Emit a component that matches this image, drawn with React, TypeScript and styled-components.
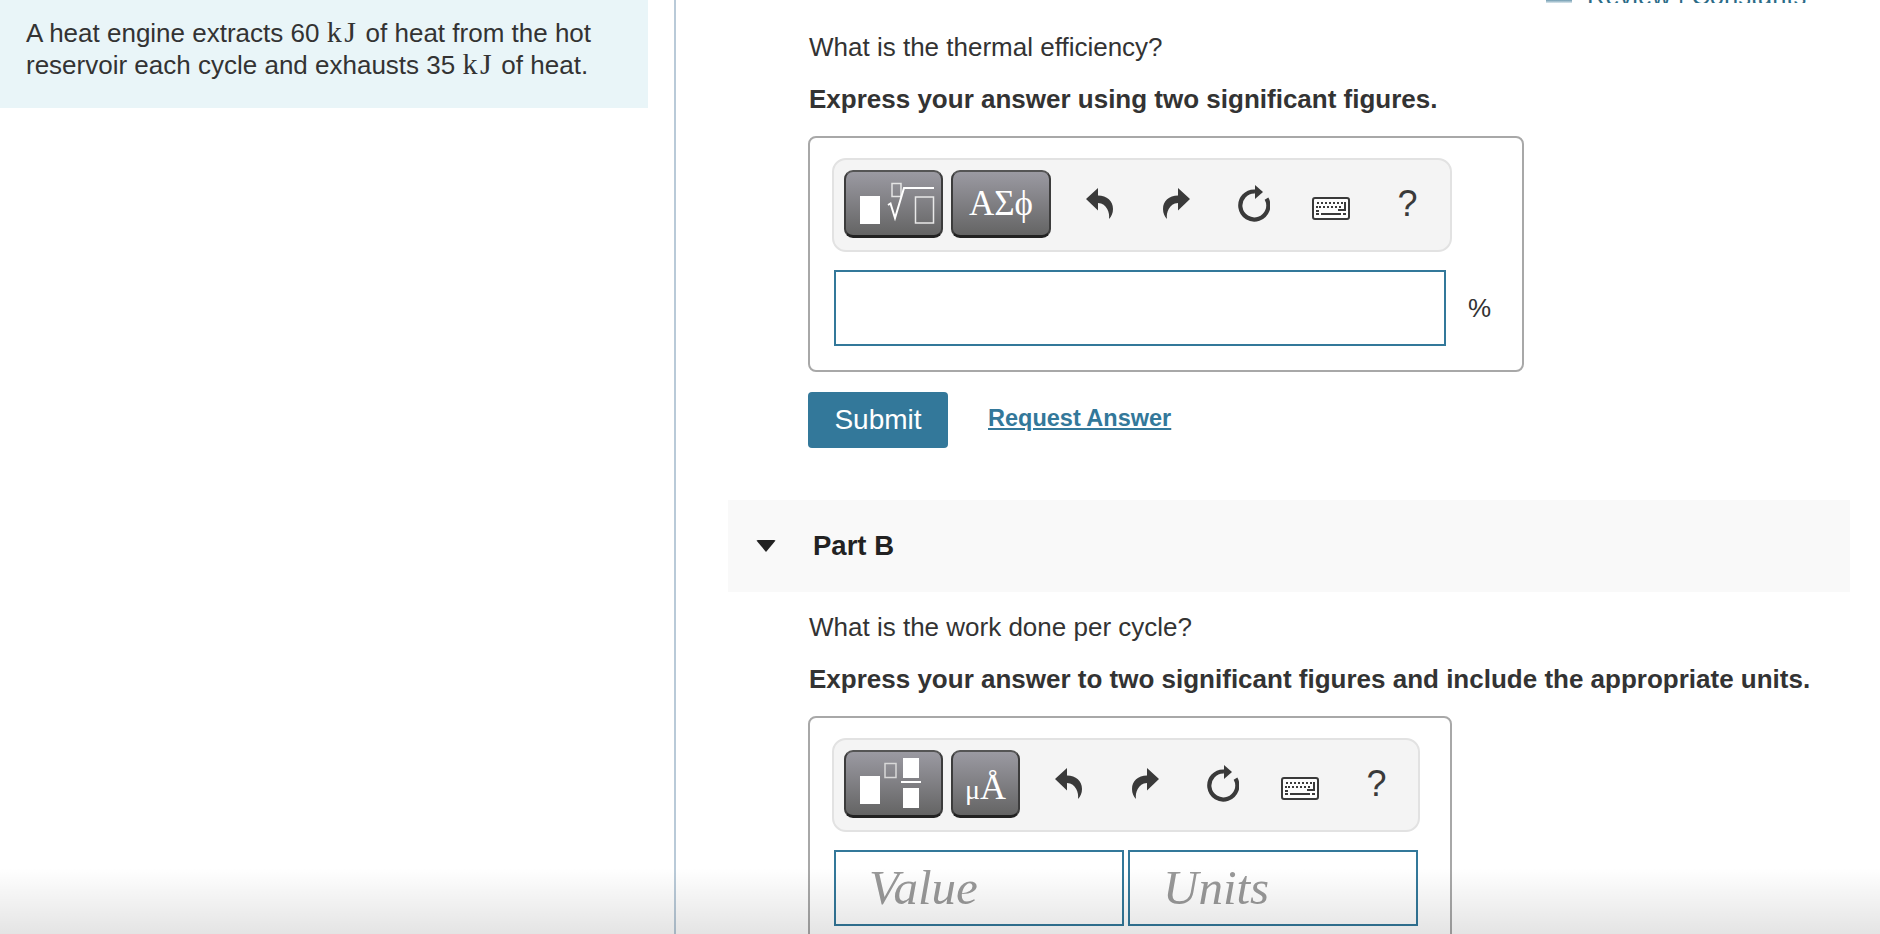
import React, { FC } from 'react';
import styled, { createGlobalStyle } from 'styled-components';

const GlobalStyle = createGlobalStyle`
  html, body {
    margin: 0;
    height: 100%;
    overflow: hidden;
    background: #fff;
  }
  body {
    font-family: "Liberation Sans", Arial, sans-serif;
    color: #333;
  }
`;

const UndoIcon: FC<{ flip?: boolean }> = ({ flip }) => (
  <svg width="27" height="31" viewBox="0 0 27 31" style={flip ? { transform: 'scaleX(-1)' } : undefined}>
    <path
      d="M0 11 L12 0 V7.5 C21 7.5 27 13 27 21 C27 25 25.5 28.500 23 31 C24 25 21 15.500 12 15 V22.500 Z"
      fill="#3a3a3a"
    />
  </svg>
);

const RefreshIcon = () => (
  <svg width="32" height="37" viewBox="0 0 32 37">
    <path d="M28.500 13.600 A14 14 0 1 1 17 6.500" fill="none" stroke="#3a3a3a" strokeWidth="4.200" />
    <path d="M17 0 L25 7 L17 14 Z" fill="#3a3a3a" />
  </svg>
);

const KeyboardIcon = () => (
  <svg width="38" height="23" viewBox="0 0 38 23">
    <rect x="1" y="1" width="36" height="21" rx="2" fill="#fdfdfd" stroke="#3a3a3a" strokeWidth="2" />
    <g fill="#3a3a3a">
      {[5, 9, 13, 17, 21, 25, 29].map((x) => (
        <rect key={x} x={x} y="5" width="2" height="2" />
      ))}
      {[7, 11, 15, 19, 23, 27].map((x) => (
        <rect key={x} x={x} y="9" width="2" height="2" />
      ))}
      <rect x="4" y="9" width="2" height="2" />
      <rect x="32" y="5" width="2" height="9" />
      <rect x="26" y="12" width="8" height="2" />
      <rect x="4" y="13" width="3" height="2" />
      <rect x="9" y="16" width="20" height="2" />
      <rect x="4" y="16" width="3" height="2" />
      <rect x="31" y="16" width="3" height="2" />
    </g>
  </svg>
);

const RootIcon = () => (
  <svg width="95" height="63" viewBox="2 2 95 63">
    <rect x="16" y="26" width="20" height="28" fill="#fff" />
    <rect x="48" y="13.500" width="9" height="13" fill="none" stroke="#e4e4e4" strokeWidth="1.500" />
    <path d="M44 35 L46.500 33.500 L51 48 L60 18 H90" fill="none" stroke="#fff" strokeWidth="2" />
    <rect x="71.500" y="27" width="18" height="26" fill="none" stroke="#e8e8e8" strokeWidth="1.500" />
  </svg>
);

const FractionIcon = () => (
  <svg width="95" height="63" viewBox="2 2 95 63">
    <rect x="16" y="26" width="20" height="28" fill="#fff" />
    <rect x="41" y="13.500" width="11" height="14" fill="none" stroke="#d8d8d8" strokeWidth="1.500" />
    <rect x="59" y="8" width="16" height="20" fill="#fff" />
    <rect x="57" y="31" width="20" height="2" fill="#fff" />
    <rect x="59" y="38" width="16" height="20" fill="#fff" />
  </svg>
);

const ToolIcons = () => (
  <>
    <ToolSlot>
      <UndoIcon />
    </ToolSlot>
    <ToolSlot>
      <UndoIcon flip />
    </ToolSlot>
    <ToolSlot>
      <RefreshIcon />
    </ToolSlot>
    <KeyboardSlot>
      <KeyboardIcon />
    </KeyboardSlot>
    <HelpSlot>?</HelpSlot>
  </>
);

const App: FC = () => (
  <>
    <GlobalStyle />
    <Page>
      <Sidebar>
        <IntroPanel>
          A heat engine extracts 60 <MathUnit>kJ</MathUnit> of heat from the hot
          <br />
          reservoir each cycle and exhausts 35 <MathUnit>kJ</MathUnit> of heat.
        </IntroPanel>
      </Sidebar>
      <Divider />
      <Main>
        <ReviewBar>
          <ReviewIcon />
          <ReviewText>Review | Constants</ReviewText>
        </ReviewBar>
        <Question>What is the thermal efficiency?</Question>
        <Instruction>Express your answer using two significant figures.</Instruction>
        <AnswerBox $width={716} $paddingRight={70}>
          <Toolbar>
            <TemplateButton>
              <RootIcon />
            </TemplateButton>
            <SymbolButton $width={100}>ΑΣϕ</SymbolButton>
            <ToolIcons />
          </Toolbar>
          <InputRow>
            <AnswerInput aria-label="Answer" />
            <Percent>%</Percent>
          </InputRow>
        </AnswerBox>
        <ActionRow>
          <SubmitButton>Submit</SubmitButton>
          <RequestLink href="#">Request Answer</RequestLink>
        </ActionRow>
        <PartHeader>
          <Caret />
          <PartTitle>Part B</PartTitle>
        </PartHeader>
        <Question $top={20}>What is the work done per cycle?</Question>
        <Instruction>Express your answer to two significant figures and include the appropriate units.</Instruction>
        <AnswerBox $width={644} $paddingRight={30}>
          <Toolbar>
            <TemplateButton>
              <FractionIcon />
            </TemplateButton>
            <SymbolButton $width={69}>
              <MicroSign>μ</MicroSign>
              <AngstromSign>Å</AngstromSign>
            </SymbolButton>
            <ToolIcons />
          </Toolbar>
          <InputRow>
            <UnitField>Value</UnitField>
            <UnitField>Units</UnitField>
          </InputRow>
        </AnswerBox>
      </Main>
      <BottomFade />
    </Page>
  </>
);

export default App;

const Page = styled.div`
  position: relative;
  display: flex;
  width: 1880px;
  height: 934px;
  overflow: hidden;
`;

const Sidebar = styled.aside`
  flex: 0 0 648px;
  margin-right: 26px;
`;

const IntroPanel = styled.div`
  box-sizing: border-box;
  height: 108px;
  padding: 17px 0 0 26px;
  background: #e9f5f8;
  font-size: 26px;
  line-height: 32px;
`;

const MathUnit = styled.span`
  font-family: "Liberation Serif", "Times New Roman", serif;
  font-size: 30px;
  letter-spacing: 2.500px;
  line-height: 1;
`;

const Divider = styled.div`
  flex: 0 0 2px;
  background: #b9cad8;
`;

const Main = styled.main`
  flex: 1;
  min-width: 0;
  padding-left: 132px;
`;

const ReviewBar = styled.div`
  display: flex;
  align-items: flex-end;
  height: 3px;
  padding-left: 738px;
  overflow: hidden;
`;

const ReviewIcon = styled.span`
  flex: 0 0 26px;
  height: 3px;
  margin-right: 15px;
  background: linear-gradient(#6f9bb0, #dde8ee);
`;

const ReviewText = styled.span`
  flex: none;
  color: #2b6b87;
  font-size: 25.500px;
  line-height: 26px;
  margin-bottom: -6px;
`;

const Question = styled.p<{ $top?: number }>`
  margin: ${({ $top }) => $top ?? 29}px 0 0 1px;
  font-size: 26px;
  line-height: 30px;
  color: #333;
`;

const Instruction = styled.p`
  margin: 22px 0 0 1px;
  font-size: 26px;
  line-height: 30px;
  font-weight: 700;
  color: #333;
`;

const AnswerBox = styled.section<{ $width: number; $paddingRight: number }>`
  box-sizing: border-box;
  width: ${({ $width }) => $width}px;
  margin-top: 22px;
  padding: 20px ${({ $paddingRight }) => $paddingRight}px 24px 22px;
  border: 2px solid #a8a8a8;
  border-radius: 8px;
`;

const Toolbar = styled.div`
  box-sizing: border-box;
  display: flex;
  align-items: center;
  height: 94px;
  padding: 0 5px 3px 10px;
  border: 2px solid #e2e2e2;
  border-radius: 14px;
  background: #f4f4f4;
`;

const ToolButton = styled.button`
  box-sizing: border-box;
  display: flex;
  align-items: center;
  justify-content: center;
  height: 68px;
  padding: 0;
  border: 2px solid;
  border-color: #555 #3c3c3c #222;
  border-bottom-width: 3px;
  border-radius: 9px;
  background: linear-gradient(#9b9aa2, #646464);
`;

const TemplateButton = styled(ToolButton)`
  flex: 0 0 99px;
  margin-right: 8px;
`;

const SymbolButton = styled(ToolButton)<{ $width: number }>`
  flex: 0 0 ${({ $width }) => $width}px;
  margin-right: 10px;
  color: #fff;
  font-family: "Liberation Serif", "Times New Roman", serif;
  font-size: 35px;
  line-height: 1;
`;

const MicroSign = styled.span`
  font-size: 28px;
  align-self: flex-end;
  margin-bottom: 11px;
`;

const AngstromSign = styled.span`
  font-size: 36px;
  align-self: flex-end;
  margin-bottom: 10px;
`;

const ToolSlot = styled.div`
  display: flex;
  flex: 0 0 77px;
  align-items: center;
  justify-content: center;
`;

const KeyboardSlot = styled(ToolSlot)`
  padding-top: 9px;
`;

const HelpSlot = styled(ToolSlot)`
  color: #3a3a3a;
  font-size: 36px;
  line-height: 1;
`;

const InputRow = styled.div`
  display: flex;
  gap: 4px;
  margin: 18px 0 0 2px;
`;

const AnswerInput = styled.input`
  box-sizing: border-box;
  flex: 0 0 612px;
  height: 76px;
  border: 2px solid #33789a;
  border-radius: 0;
  background: #fff;
  outline: none;
`;

const Percent = styled.span`
  align-self: center;
  margin-left: 18px;
  font-size: 26px;
  color: #333;
`;

const UnitField = styled.div`
  box-sizing: border-box;
  flex: 0 0 290px;
  height: 76px;
  padding-left: 33px;
  border: 2px solid #33789a;
  color: #999;
  font-family: "Liberation Serif", "Times New Roman", serif;
  font-size: 49px;
  font-style: italic;
  line-height: 72px;
`;

const ActionRow = styled.div`
  display: flex;
  align-items: center;
  gap: 40px;
  margin-top: 20px;
`;

const SubmitButton = styled.button`
  width: 140px;
  height: 56px;
  padding: 0;
  border: 0;
  border-radius: 4px;
  background: #33789a;
  color: #fff;
  font-family: inherit;
  font-size: 28px;
`;

const RequestLink = styled.a`
  margin-bottom: 4px;
  color: #33789a;
  font-size: 23.500px;
  font-weight: 700;
`;

const PartHeader = styled.div`
  display: flex;
  align-items: center;
  height: 92px;
  margin: 52px 30px 0 -80px;
  padding-left: 28px;
  background: #f9f9f9;
`;

const Caret = styled.span`
  width: 0;
  height: 0;
  margin-right: 37px;
  border-top: 12px solid #222;
  border-left: 10.5px solid transparent;
  border-right: 10.5px solid transparent;
  border-radius: 2px;
`;

const PartTitle = styled.span`
  color: #222;
  font-size: 27.500px;
  font-weight: 700;
`;

const BottomFade = styled.div`
  position: absolute;
  left: 0;
  right: 0;
  bottom: 0;
  height: 66px;
  background: linear-gradient(rgba(0, 0, 0, 0), rgba(0, 0, 0, 0.105));
  pointer-events: none;
`;
